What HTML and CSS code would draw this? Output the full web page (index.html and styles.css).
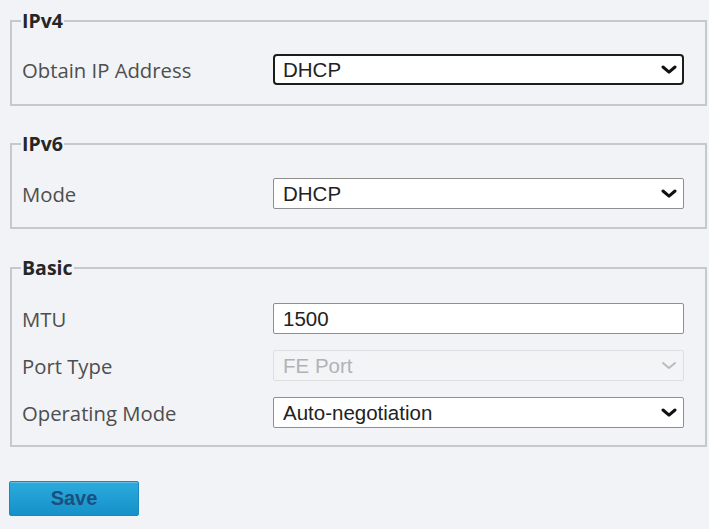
FILE: index.html
```html
<!DOCTYPE html>
<html>
<head>
<meta charset="utf-8">
<link rel="stylesheet" href="styles.css">
</head>
<body>
<div class="page">
  <fieldset class="group ipv4">
    <legend>IPv4</legend>
    <div class="row">
      <span class="label">Obtain IP Address</span>
      <div class="select focused"><span class="val">DHCP</span>
        <svg class="chev" viewBox="0 0 16 9" width="16" height="9"><path d="M2 2 L8 7.2 L14 2" fill="none" stroke="#111" stroke-width="3" stroke-linecap="round" stroke-linejoin="round"/></svg>
      </div>
    </div>
  </fieldset>
  <fieldset class="group ipv6">
    <legend>IPv6</legend>
    <div class="row">
      <span class="label">Mode</span>
      <div class="select"><span class="val">DHCP</span>
        <svg class="chev" viewBox="0 0 16 9" width="16" height="9"><path d="M2 2 L8 7.2 L14 2" fill="none" stroke="#111" stroke-width="3" stroke-linecap="round" stroke-linejoin="round"/></svg>
      </div>
    </div>
  </fieldset>
  <fieldset class="group basic">
    <legend>Basic</legend>
    <div class="row">
      <span class="label">MTU</span>
      <div class="input"><span class="val">1500</span></div>
    </div>
    <div class="row">
      <span class="label">Port Type</span>
      <div class="select disabled"><span class="val">FE Port</span>
        <svg class="chev" viewBox="0 0 16 9" width="16" height="9"><path d="M2 2 L8 7 L14 2" fill="none" stroke="#b9bcbf" stroke-width="2" stroke-linecap="round" stroke-linejoin="round"/></svg>
      </div>
    </div>
    <div class="row">
      <span class="label">Operating Mode</span>
      <div class="select"><span class="val">Auto-negotiation</span>
        <svg class="chev" viewBox="0 0 16 9" width="16" height="9"><path d="M2 2 L8 7.2 L14 2" fill="none" stroke="#111" stroke-width="3" stroke-linecap="round" stroke-linejoin="round"/></svg>
      </div>
    </div>
  </fieldset>
  <div class="actions">
    <button class="save">Save</button>
  </div>
</div>
</body>
</html>
```
FILE: styles.css
```css
html, body {
  margin: 0;
  padding: 0;
  background: #f1f3f6;
}
.page {
  padding: 9px 2px 0 10px;
  font-family: "Open Sans", "Noto Sans", sans-serif;
}
.group {
  margin: 0 0 26px 0;
  border: 2px solid #c6c9cc;
  padding: 23px 21px 17px 10px;
  min-width: 0;
}
.group.ipv4 {
  padding-top: 21px;
  padding-bottom: 19px;
}
.group.ipv6 {
  padding-top: 22px;
  padding-bottom: 18px;
  margin-bottom: 27px;
}
.group legend {
  font-family: "Open Sans", sans-serif;
  font-weight: 700;
  font-size: 19.5px;
  line-height: 24px;
  color: #262626;
  padding: 0 1px;
  margin-left: -1px;
}
.basic .row + .row {
  margin-top: 16px;
}
.row {
  display: flex;
  align-items: center;
  height: 31px;
}
.label {
  width: 251px;
  flex: none;
  font-size: 20.3px;
  color: #4e4e4e;
  line-height: 24px;
}
.select, .input {
  flex: 1;
  height: 31px;
  box-sizing: border-box;
  background: #fff;
  border: 1px solid #8e8e8e;
  border-radius: 2px;
  display: flex;
  align-items: center;
  padding: 0 6px 0 9px;
  font-family: "Liberation Sans", Arial, sans-serif;
  font-size: 20.5px;
  color: #222;
}
.select .val, .input .val {
  flex: 1;
  line-height: 24px;
}
.select.focused {
  border: 2px solid #1c1c1c;
  border-radius: 4px;
  padding-left: 8px;
  padding-right: 5px;
}
.select.disabled {
  background: #f3f4f5;
  border-color: #dcdee0;
  color: #b0b3b6;
}
.chev {
  flex: none;
  display: block;
}
.actions {
  padding-top: 8px;
}
.save {
  margin-left: -1px;
  width: 130px;
  height: 35px;
  border: 1px solid #1a87bd;
  border-radius: 2px;
  background: linear-gradient(#2caadd, #1591c9);
  color: #1b4f7e;
  font-family: "Liberation Sans", Arial, sans-serif;
  font-weight: 700;
  font-size: 20px;
  padding: 0;
  box-shadow: inset 0 1px 0 rgba(255,255,255,0.25);
}
```
